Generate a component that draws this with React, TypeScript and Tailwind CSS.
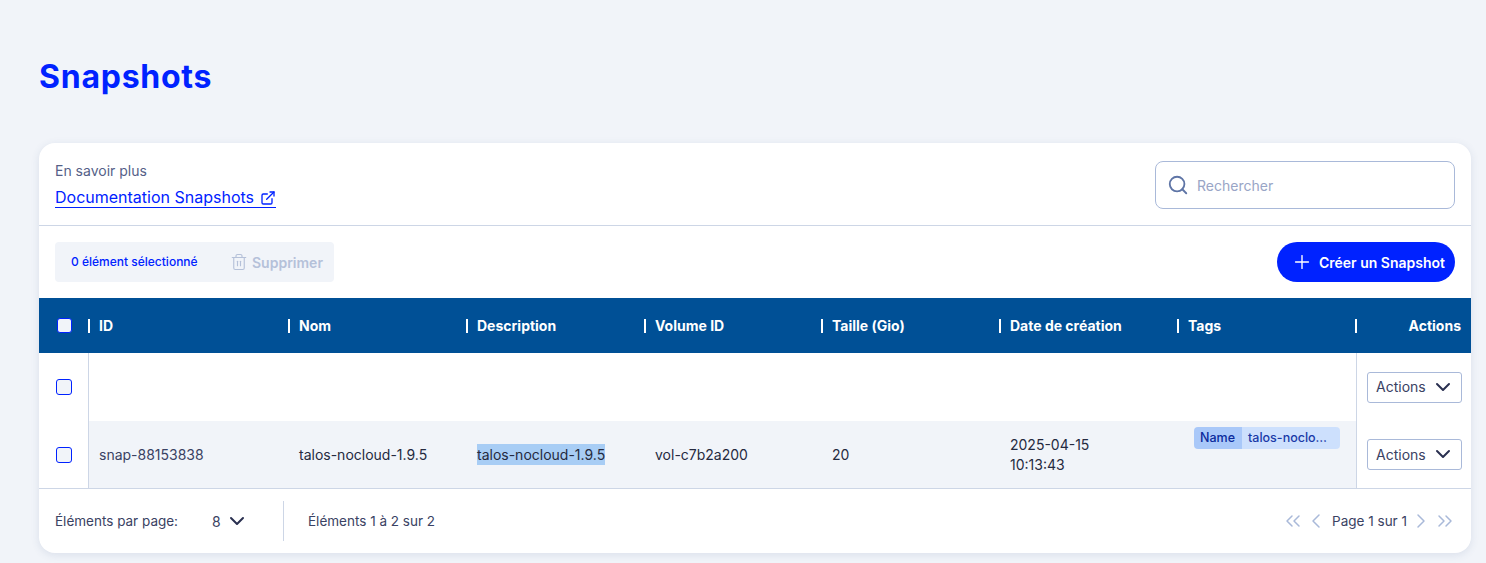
import { ChevronDown, ChevronLeft, ChevronRight, ChevronsLeft, ChevronsRight, ExternalLink, Plus, Search, Trash2 } from "lucide-react";

const headerColumns = "grid grid-cols-[49px_200px_178px_178px_177px_178px_178px_178px_116px]";
const rowColumns = "grid grid-cols-[50px_199px_178px_178px_177px_178px_178px_179px_115px]";
const headers = ["ID", "Nom", "Description", "Volume ID", "Taille (Gio)", "Date de création", "Tags"];

function Checkbox() {
  return <span className="block h-4 w-4 rounded-[3px] border border-[#0022ff] bg-[#f1f4f9]" />;
}

function ActionsButton() {
  return (
    <button className="flex h-[31px] w-[95px] items-center justify-between rounded-[3px] border border-[#a9b9d9] bg-white pb-px pl-[8px] pr-[6px] text-[14px] text-[#3a4263]">
      Actions
      <ChevronDown size={24} strokeWidth={2} className="text-[#2a3050]" />
    </button>
  );
}

export default function App() {
  return (
    <div className="h-[563px] overflow-hidden bg-[#f1f4f9] px-[39px] pt-[58px] font-['Inter',sans-serif] text-[14px]">
      <h1 className="h-[85px] text-[32px] font-bold leading-[38px] tracking-[0.75px] text-[#0022ff]">Snapshots</h1>

      <div className="w-[1432px] overflow-hidden rounded-[16px] bg-white shadow-[0_2px_8px_rgba(60,80,130,0.12)]">
        {/* Doc link and search */}
        <div className="flex h-[83px] items-start justify-between border-b border-[#cdd6e6] pl-4 pr-4">
          <div className="pt-[19px]">
            <p className="text-[14px] leading-[17px] text-[#555f88]">En savoir plus</p>
            <a className="mt-[9px] flex h-[20px] items-center gap-[6px] border-b border-[#0022ff] text-[16px] leading-[19px] text-[#0022ff]">
              Documentation Snapshots
              <ExternalLink size={16} strokeWidth={2} />
            </a>
          </div>
          <div className="mt-[18px] flex h-[48px] w-[300px] items-center gap-[8px] rounded-[8px] border border-[#a9b9d9] pl-[11px]">
            <Search size={22} strokeWidth={2} className="text-[#5f75a6]" />
            <span className="pt-px text-[14px] text-[#99a5c6]">Rechercher</span>
          </div>
        </div>

        {/* Toolbar */}
        <div className="flex h-[72px] items-start justify-between px-4 pt-4">
          <div className="flex h-10 w-[279px] items-center rounded-[4px] bg-[#f1f4f9] pl-4">
            <span className="w-[159px] text-[12px] font-medium text-[#0022ff]">0 élément sélectionné</span>
            <Trash2 size={18} strokeWidth={1.5} className="text-[#b5c1d9]" />
            <span className="ml-[4px] pt-px text-[14px] font-semibold text-[#b5c1d9]">Supprimer</span>
          </div>
          <button className="flex h-10 w-[178px] items-center gap-[6px] rounded-full bg-[#0022ff] pl-[14px] text-[14px] font-semibold text-white">
            <Plus size={22} strokeWidth={1.5} />
            Créer un Snapshot
          </button>
        </div>

        {/* Table header */}
        <div className={`${headerColumns} h-[55px] items-center bg-[#005096] text-[14px] font-bold text-white`}>
          <div className="pl-[18px]">
            <span className="block h-[15px] w-[15px] rounded-[3px] border border-[#0022ff] bg-[#f1f4f9]" />
          </div>
          {headers.map((label) => (
            <div key={label} className="flex items-center gap-[9px]">
              <span className="h-[14px] w-[2px] bg-white" />
              {label}
            </div>
          ))}
          <div className="flex items-center justify-between pr-[10px]">
            <span className="h-[14px] w-[2px] bg-white" />
            Actions
          </div>
        </div>

        {/* Empty row */}
        <div className={`${rowColumns} h-[68px]`}>
          <div className="flex items-center border-r border-[#cdd6e6] pl-[17px]">
            <Checkbox />
          </div>
          <div className="col-span-7" />
          <div className="flex items-center border-l border-[#cdd6e6] pl-[10px]">
            <ActionsButton />
          </div>
        </div>

        {/* Snapshot row */}
        <div className={`${rowColumns} h-[68px] border-b border-[#cdd6e6] text-[#252a3f]`}>
          <div className="flex items-center border-r border-[#cdd6e6] pl-[17px]">
            <Checkbox />
          </div>
          <div className="flex items-center bg-[#f1f4f9] pb-px pl-[10px] text-[#3a4263]">snap-88153838</div>
          <div className="flex items-center bg-[#f1f4f9] pb-px pl-[11px]">talos-nocloud-1.9.5</div>
          <div className="flex items-center bg-[#f1f4f9] pb-px pl-[11px]">
            <span className="bg-[#a8cdf5]">talos-nocloud-1.9.5</span>
          </div>
          <div className="flex items-center bg-[#f1f4f9] pb-px pl-[11px]">vol-c7b2a200</div>
          <div className="flex items-center bg-[#f1f4f9] pb-px pl-[11px]">20</div>
          <div className="flex items-center bg-[#f1f4f9] pl-[11px] leading-[20px]">
            2025-04-15
            <br />
            10:13:43
          </div>
          <div className="bg-[#f1f4f9] pl-[17px] pt-[6px]">
            <div className="flex h-[22px] w-[146px] overflow-hidden rounded-[4px] text-[12.5px] font-medium leading-[22px]">
              <span className="w-[48px] bg-[#a9c8f9] pl-[6px] text-[#0b2a9c]">Name</span>
              <span className="flex-1 bg-[#cde0fd] pl-[6px] text-[#1a3aa8]">talos-noclo…</span>
            </div>
          </div>
          <div className="flex items-center border-l border-[#cdd6e6] pl-[10px]">
            <ActionsButton />
          </div>
        </div>

        {/* Footer */}
        <div className="flex h-[64px] items-center pl-4 pr-[14px] text-[#3a4263]">
          <span className="w-[157px] text-[13.5px]">Éléments par page:</span>
          <span className="w-[18px] text-[14px]">8</span>
          <ChevronDown size={24} strokeWidth={2} className="-ml-[5px] text-[#2a3050]" />
          <span className="ml-[34px] h-10 w-px bg-[#cdd6e6]" />
          <span className="ml-[24px] text-[13.5px]">Éléments 1 à 2 sur 2</span>
          <div className="ml-auto flex items-center text-[13.5px] text-[#a9b9d9]">
            <ChevronsLeft size={24} strokeWidth={1.5} />
            <ChevronLeft size={24} strokeWidth={1.5} className="-ml-px" />
            <span className="ml-[4px] text-[#3a4263]">Page 1 sur 1</span>
            <ChevronRight size={24} strokeWidth={1.5} className="ml-[2px]" />
            <ChevronsRight size={24} strokeWidth={1.5} />
          </div>
        </div>
      </div>
    </div>
  );
}
